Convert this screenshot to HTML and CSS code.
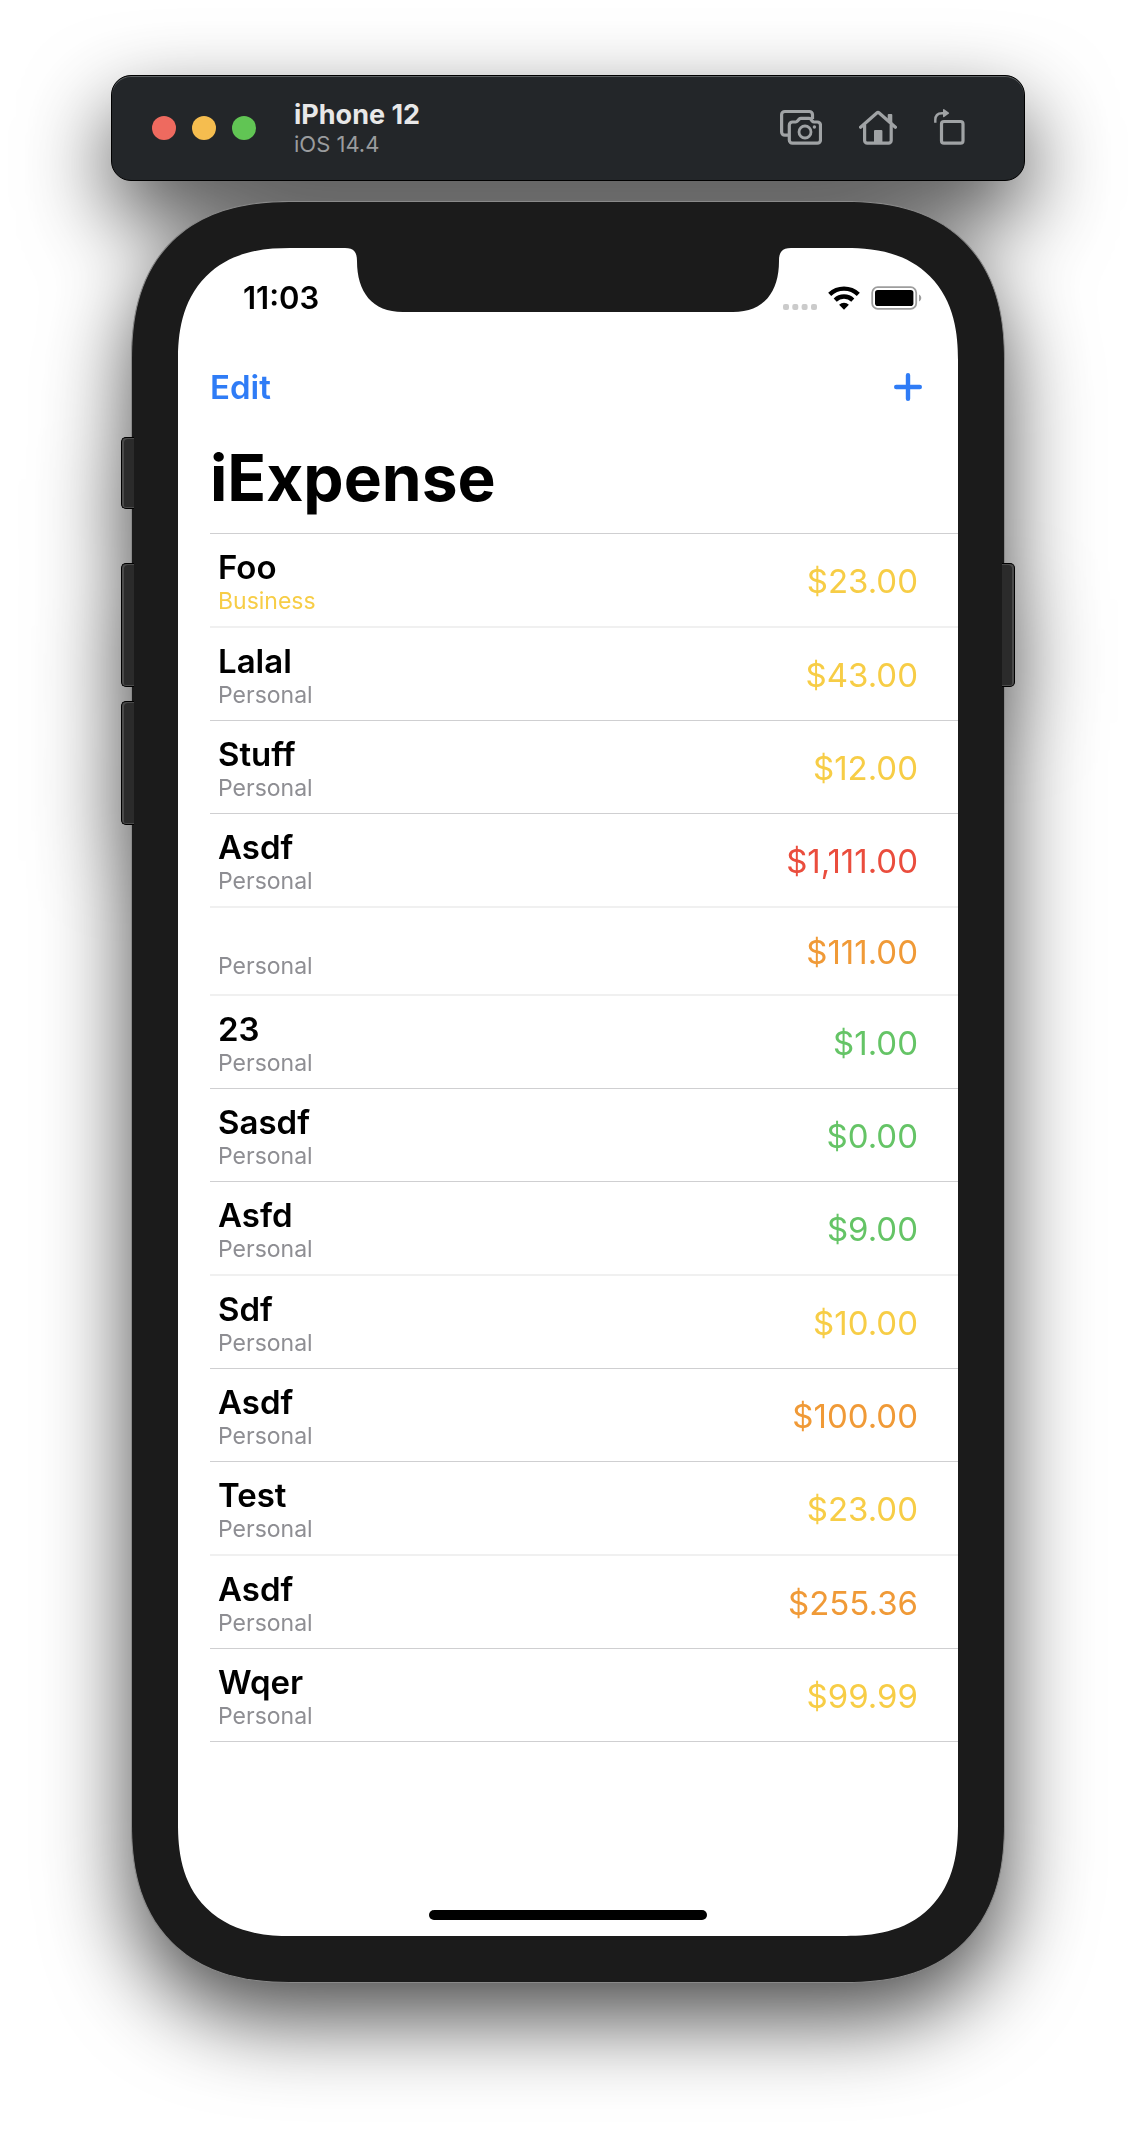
FILE: index.html
```html
<!DOCTYPE html>
<html lang="en">
<head>
<meta charset="utf-8">
<meta name="viewport" content="width=device-width, initial-scale=1">
<title>iExpense</title>
<link rel="stylesheet" href="styles.css">
</head>
<body>
<main class="simulator">
  <header class="toolbar">
    <div class="lights">
      <button class="light light-close" type="button" aria-label="Close"></button>
      <button class="light light-minimize" type="button" aria-label="Minimize"></button>
      <button class="light light-zoom" type="button" aria-label="Zoom"></button>
    </div>
    <div class="caption">
      <div class="device-name">iPhone 12</div>
      <div class="device-os">iOS 14.4</div>
    </div>
    <div class="tools">
      <button class="tool" type="button" aria-label="Screenshot">
        <svg width="42" height="38" viewBox="0 0 42 38" fill="none" stroke="currentColor" stroke-width="3.200" stroke-linejoin="round">
          <path d="M8 26.2H4.8a3.2 3.2 0 0 1-3.200-3.200V5.700a3.200 3.200 0 0 1 3.200-3.200h24.500a3.200 3.200 0 0 1 3.200 3.200V10"/>
          <path d="M12.500 13h3.200c.8 0 1.300-.3 1.800-.9l1.700-2c.5-.6 1-.8 1.800-.8h7.800c.8 0 1.300.2 1.800.8l1.700 2c.5.6 1 .9 1.800.9h3.200a3.200 3.200 0 0 1 3.200 3.200v14.800a3.200 3.200 0 0 1-3.200 3.200H12.500a3.200 3.200 0 0 1-3.200-3.200V16.200a3.200 3.200 0 0 1 3.200-3.200z"/>
          <circle cx="25" cy="23" r="6" stroke-width="2.800"/>
          <circle cx="34.400" cy="18" r="1.700" fill="currentColor" stroke="none"/>
        </svg>
      </button>
      <button class="tool" type="button" aria-label="Home">
        <svg width="38" height="38" viewBox="0 0 38 38" fill="none" stroke="currentColor" stroke-width="3.200" stroke-linejoin="round" stroke-linecap="round">
          <path d="M1.600 18.200 17.800 4a1.800 1.800 0 0 1 2.400 0l16.200 14.200"/>
          <path d="M5.600 16v15.500a2.700 2.700 0 0 0 2.700 2.700h21.200a2.700 2.700 0 0 0 2.700-2.700V16"/>
          <path d="M15 22a1 1 0 0 1 1-1h6.400a1 1 0 0 1 1 1v13H15zM28.700 6a1 1 0 0 1 1-1h2.600a1 1 0 0 1 1 1v10l-4.600-4z" fill="currentColor" stroke="none"/>
        </svg>
      </button>
      <button class="tool" type="button" aria-label="Rotate">
        <svg width="31" height="38" viewBox="0 0 31 38" fill="none" stroke="currentColor" stroke-width="3.200">
          <rect x="7.500" y="12.500" width="21.500" height="21.700" rx="2.500"/>
          <path d="M1.300 13.800V11c0-4.200 2.500-6.800 6.700-6.800h2" stroke-width="2.400"/>
          <path d="M9 .8c0-.7.6-1 1.200-.6l4.500 3.300c.5.400.5.900 0 1.300l-4.500 3.300C9.600 8.500 9 8.200 9 7.500z" fill="currentColor" stroke="none"/>
        </svg>
      </button>
    </div>
  </header>

  <section class="phone">
    <span class="side-key key-mute"></span>
    <span class="side-key key-up"></span>
    <span class="side-key key-down"></span>
    <span class="side-key key-power"></span>
    <div class="screen">
      <div class="status">
        <time class="clock">11:03</time>
        <div class="indicators">
          <svg class="cell" width="34" height="6" viewBox="0 0 34 6" fill="#cbcbcb">
            <rect width="6" height="6" rx="2"/><rect x="9.300" width="6" height="6" rx="2"/><rect x="18.600" width="6" height="6" rx="2"/><rect x="28" width="6" height="6" rx="2"/>
          </svg>
          <svg width="32" height="24" viewBox="0 0 32 24" fill="none" stroke="#000" stroke-width="4.400">
            <path d="M1.700 8.400a20.600 20.600 0 0 1 28.600 0"/>
            <path d="M7.200 14.100a12.700 12.700 0 0 1 17.600 0"/>
            <path d="M16 23.700l-4.900-5a7 7 0 0 1 9.800 0z" fill="#000" stroke="none"/>
          </svg>
          <svg width="51" height="24" viewBox="0 0 51 24">
            <rect x="1.200" y="1.200" width="44" height="21.600" rx="5.500" fill="none" stroke="#9d9d9d" stroke-width="1.800"/>
            <rect x="4" y="4" width="38.400" height="16" rx="2.800"/>
            <path d="M48 8.500c3 1.500 3 5.500 0 7z" fill="#9d9d9d"/>
          </svg>
        </div>
        <svg class="notch" width="446" height="64" viewBox="0 0 446 64" fill="#1b1b1b">
          <path d="M0 0C9 0 12 4 12 13C12 44 27 64 58 64H388C419 64 434 44 434 13C434 4 437 0 446 0z"/>
        </svg>
      </div>

      <nav class="navbar">
        <button class="edit" type="button">Edit</button>
        <button class="add" type="button" aria-label="Add expense">
          <svg width="28" height="28" viewBox="0 0 28 28" stroke="currentColor" stroke-width="4.400" stroke-linecap="round"><path d="M14 2.200v23.600M2.200 14h23.600"/></svg>
        </button>
      </nav>
      <h1 class="title">iExpense</h1>

      <ul class="expenses">
        <li class="row soft"><div><div class="name">Foo</div><div class="kind medium">Business</div></div><span class="amount medium">$23.00</span></li>
        <li class="row"><div><div class="name">Lalal</div><div class="kind">Personal</div></div><span class="amount medium">$43.00</span></li>
        <li class="row"><div><div class="name">Stuff</div><div class="kind">Personal</div></div><span class="amount medium">$12.00</span></li>
        <li class="row soft"><div><div class="name">Asdf</div><div class="kind">Personal</div></div><span class="amount extreme">$1,111.00</span></li>
        <li class="row soft unnamed"><div><div class="name"></div><div class="kind">Personal</div></div><span class="amount high">$111.00</span></li>
        <li class="row"><div><div class="name">23</div><div class="kind">Personal</div></div><span class="amount low">$1.00</span></li>
        <li class="row"><div><div class="name">Sasdf</div><div class="kind">Personal</div></div><span class="amount low">$0.00</span></li>
        <li class="row soft"><div><div class="name">Asfd</div><div class="kind">Personal</div></div><span class="amount low">$9.00</span></li>
        <li class="row"><div><div class="name">Sdf</div><div class="kind">Personal</div></div><span class="amount medium">$10.00</span></li>
        <li class="row"><div><div class="name">Asdf</div><div class="kind">Personal</div></div><span class="amount high">$100.00</span></li>
        <li class="row soft"><div><div class="name">Test</div><div class="kind">Personal</div></div><span class="amount medium">$23.00</span></li>
        <li class="row"><div><div class="name">Asdf</div><div class="kind">Personal</div></div><span class="amount high">$255.36</span></li>
        <li class="row"><div><div class="name">Wqer</div><div class="kind">Personal</div></div><span class="amount medium">$99.99</span></li>
      </ul>
      <div class="home-indicator"></div>
    </div>
  </section>
</main>
</body>
</html>
```
FILE: styles.css
```css
* {
  box-sizing: border-box;
}

body {
  margin: 0;
  background: #fff;
  color: #000;
  font-family: Inter, "Liberation Sans", sans-serif;
}

button {
  display: block;
  margin: 0;
  padding: 0;
  border: 0;
  background: none;
  color: inherit;
  font: inherit;
  cursor: pointer;
}

svg {
  display: block;
}

.simulator {
  display: flex;
  flex-direction: column;
  align-items: center;
  gap: 20px;
  padding: 75px 24px 149px;
  filter: drop-shadow(0 36px 43px rgba(0, 0, 0, 0.7));
}

/* Simulator window bar */
.toolbar {
  display: flex;
  align-items: center;
  width: 100%;
  max-width: 914px;
  padding: 23px 59px 23px 40px;
  border: 1px solid #000;
  border-radius: 20px;
  background: #232629;
  box-shadow: inset 0 1px 0 #5d6163;
}

.lights {
  display: flex;
  gap: 16px;
}

.light {
  width: 24px;
  height: 24px;
  border-radius: 50%;
}

.light-close { background: #ee6a5f; }
.light-minimize { background: #f5bd4f; }
.light-zoom { background: #61c554; }

.caption {
  margin-left: 38px;
}

.device-name {
  color: #e8e8e8;
  font-size: 27px;
  font-weight: 700;
  line-height: 32px;
}

.device-os {
  color: #9a9c9e;
  font-size: 22px;
  line-height: 26px;
}

.tools {
  display: flex;
  gap: 37px;
  margin-left: auto;
  color: #a0a3a5;
}

/* Phone body */
.phone {
  position: relative;
  width: 100%;
  max-width: 874px;
  padding: 46px;
  border: 1px solid #8a8a8a;
  border-radius: 134px;
  background: #1b1b1b;
}

.side-key {
  position: absolute;
  left: -11px;
  width: 13px;
  height: 124px;
  border: 1px solid #000;
  border-right: 0;
  border-radius: 5px 0 0 5px;
  background: #2b2b2b;
  box-shadow: inset 2px 1px 0 #4a4a4a, inset 0 -1px 0 #4a4a4a;
}

.key-mute {
  top: 235px;
  height: 72px;
}

.key-up { top: 361px; }
.key-down { top: 499px; }

.key-power {
  top: 361px;
  right: -11px;
  left: auto;
  border-right: 1px solid #000;
  border-left: 0;
  border-radius: 0 5px 5px 0;
  box-shadow: inset -2px 1px 0 #4a4a4a, inset 0 -1px 0 #4a4a4a;
}

.screen {
  display: flex;
  flex-direction: column;
  overflow: hidden;
  border-radius: 96px;
  background: #fff;
}

@supports (corner-shape: superellipse(1.26)) {
  .phone {
    border-radius: 160px;
    corner-shape: superellipse(1.26);
  }

  .screen {
    border-radius: 112px;
    corner-shape: superellipse(1.26);
  }
}

/* Status bar */
.status {
  position: relative;
  display: flex;
  align-items: center;
  justify-content: space-between;
  height: 94px;
  padding: 6px 36px 0 65px;
}

.clock {
  font-size: 31px;
  font-weight: 600;
  line-height: 36px;
}

.indicators {
  display: flex;
  align-items: center;
  gap: 11px;
}

.cell {
  align-self: flex-end;
}

.notch {
  position: absolute;
  top: 0;
  left: 50%;
  transform: translateX(-50%);
}

/* Navigation */
.navbar {
  display: flex;
  align-items: center;
  justify-content: space-between;
  height: 88px;
  padding: 2px 36px 0 32px;
  color: #2f7cf6;
}

.edit {
  font-size: 33px;
  font-weight: 600;
  line-height: 40px;
}

.title {
  margin: 0;
  padding: 0 32px 7px;
  font-size: 64px;
  font-weight: 700;
  line-height: 96px;
}

/* Expense list */
.expenses {
  margin: 0 0 0 32px;
  padding: 0;
  border-top: 1px solid #cfcfd1;
  list-style: none;
}

.row {
  display: flex;
  align-items: center;
  justify-content: space-between;
  padding: 13px 40px 11px 8px;
  border-bottom: 1px solid #cfcfd1;
}

.row.soft {
  border-bottom: 2px solid #f0f0f0;
}

.name {
  font-size: 33px;
  font-weight: 600;
  line-height: 40px;
}

.unnamed {
  padding-top: 16px;
  padding-bottom: 14px;
}

.unnamed .name {
  height: 28px;
}

.kind {
  color: #8e8e93;
  font-size: 23px;
  line-height: 28px;
}

.amount {
  font-size: 33px;
  line-height: 40px;
}

.low { color: #65c466; }
.medium { color: #f7cd46; }
.high { color: #f09a37; }
.extreme { color: #ea4d3d; }

.home-indicator {
  align-self: center;
  width: 278px;
  height: 10px;
  margin: 168px 0 16px;
  border-radius: 5px;
  background: #000;
}
```
